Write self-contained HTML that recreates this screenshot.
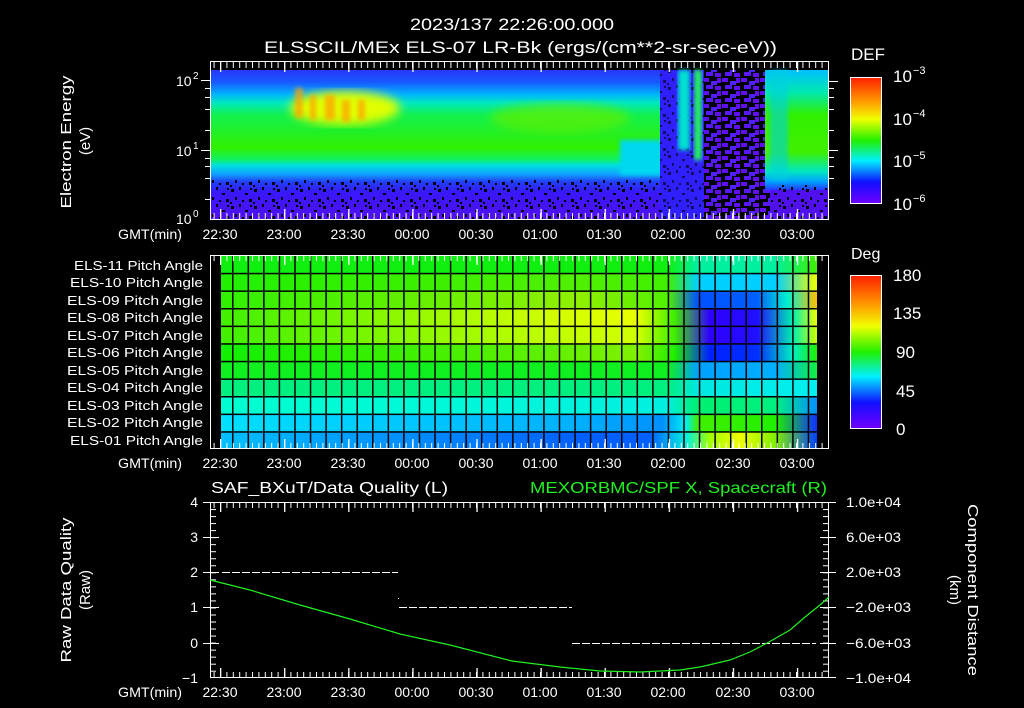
<!DOCTYPE html>
<html><head><meta charset="utf-8"><style>
html,body{margin:0;padding:0;background:#000;}
svg{display:block}
text{font-family:"Liberation Sans",sans-serif;fill:#fff;}
</style></head><body>
<svg width="1024" height="708" viewBox="0 0 1024 708" xmlns="http://www.w3.org/2000/svg">
<defs>
<linearGradient id="band" x1="0" y1="70" x2="0" y2="219" gradientUnits="userSpaceOnUse">
<stop offset="0" stop-color="#2838f8"/><stop offset="0.08" stop-color="#1858ff"/>
<stop offset="0.16" stop-color="#00b0ff"/><stop offset="0.22" stop-color="#00e8c0"/>
<stop offset="0.3" stop-color="#10f050"/><stop offset="0.52" stop-color="#30f000"/>
<stop offset="0.6" stop-color="#10f060"/><stop offset="0.64" stop-color="#00e0e0"/>
<stop offset="0.7" stop-color="#10a0ff"/><stop offset="0.75" stop-color="#2040ff"/>
<stop offset="0.82" stop-color="#3818ff"/><stop offset="1" stop-color="#5010f0"/>
</linearGradient>
<linearGradient id="band2" x1="0" y1="70" x2="0" y2="219" gradientUnits="userSpaceOnUse">
<stop offset="0" stop-color="#00c0ff"/><stop offset="0.15" stop-color="#00e8b0"/>
<stop offset="0.3" stop-color="#30f000"/><stop offset="0.55" stop-color="#40f000"/>
<stop offset="0.68" stop-color="#00e8c0"/><stop offset="0.75" stop-color="#00a0ff"/>
<stop offset="0.82" stop-color="#3020ff"/><stop offset="1" stop-color="#5010f0"/>
</linearGradient>
<filter id="bl"><feGaussianBlur stdDeviation="5"/></filter>
<filter id="bl2"><feGaussianBlur stdDeviation="2"/></filter>
<pattern id="noise" patternUnits="userSpaceOnUse" width="23" height="17">
<rect x="1" y="2" width="3" height="3" fill="#000"/><rect x="9" y="0" width="2" height="3" fill="#000"/>
<rect x="15" y="6" width="3" height="2" fill="#000"/><rect x="5" y="10" width="2" height="3" fill="#000"/>
<rect x="19" y="12" width="3" height="3" fill="#000"/><rect x="12" y="13" width="2" height="2" fill="#000"/>
<rect x="0" y="15" width="2" height="2" fill="#000"/><rect x="20" y="1" width="2" height="2" fill="#000"/>
</pattern>
<pattern id="noise2" patternUnits="userSpaceOnUse" width="19" height="13">
<rect x="0" y="0" width="19" height="13" fill="#000"/>
<rect x="0" y="0" width="6" height="4" fill="#6010f0"/><rect x="8" y="3" width="6" height="4" fill="#5020ff"/>
<rect x="14" y="0" width="4" height="5" fill="#6010f0"/><rect x="3" y="7" width="7" height="4" fill="#5818ff"/>
<rect x="12" y="8" width="6" height="4" fill="#6010f0"/>
</pattern>
<pattern id="tkmin" patternUnits="userSpaceOnUse" x="220" y="0" width="6.4" height="708">
<rect x="0" y="0" width="1" height="708" fill="#fff"/></pattern>
<pattern id="tkmaj" patternUnits="userSpaceOnUse" x="220" y="0" width="64.1" height="708">
<rect x="0" y="0" width="1.3" height="708" fill="#fff"/></pattern>
<pattern id="tkv" patternUnits="userSpaceOnUse" x="0" y="502" width="1024" height="7.03">
<rect x="0" y="0" width="1024" height="1" fill="#fff"/></pattern>
<pattern id="grid" patternUnits="userSpaceOnUse" x="232" y="0" width="15.56" height="708">
<rect x="0" y="0" width="1.5" height="708" fill="#000"/></pattern>
<linearGradient id="cb" x1="0" y1="0" x2="0" y2="1">
<stop offset="0" stop-color="#ff2000"/><stop offset="0.2" stop-color="#ffa000"/>
<stop offset="0.33" stop-color="#f0ff00"/><stop offset="0.5" stop-color="#20f000"/>
<stop offset="0.66" stop-color="#00f0ff"/><stop offset="0.83" stop-color="#1010ff"/>
<stop offset="1" stop-color="#7000ff"/></linearGradient>
<linearGradient id="r1" gradientUnits="userSpaceOnUse" x1="221" x2="817" y1="0" y2="0"><stop offset="0" stop-color="#10f010"/><stop offset="0.75" stop-color="#10f010"/><stop offset="0.8" stop-color="#00f0a0"/><stop offset="0.93" stop-color="#00f0a0"/><stop offset="1" stop-color="#40f000"/></linearGradient>
<linearGradient id="r2" gradientUnits="userSpaceOnUse" x1="221" x2="817" y1="0" y2="0"><stop offset="0" stop-color="#20f000"/><stop offset="0.6" stop-color="#50f000"/><stop offset="0.75" stop-color="#40f000"/><stop offset="0.8" stop-color="#00d0ff"/><stop offset="0.93" stop-color="#00d0ff"/><stop offset="1" stop-color="#f0ff00"/></linearGradient>
<linearGradient id="r3" gradientUnits="userSpaceOnUse" x1="221" x2="817" y1="0" y2="0"><stop offset="0" stop-color="#30f000"/><stop offset="0.6" stop-color="#90f000"/><stop offset="0.75" stop-color="#50f000"/><stop offset="0.8" stop-color="#0050ff"/><stop offset="0.9" stop-color="#0060ff"/><stop offset="0.95" stop-color="#00f0d0"/><stop offset="1" stop-color="#ffc000"/></linearGradient>
<linearGradient id="r4" gradientUnits="userSpaceOnUse" x1="221" x2="817" y1="0" y2="0"><stop offset="0" stop-color="#40f000"/><stop offset="0.55" stop-color="#d0ff00"/><stop offset="0.7" stop-color="#e8ff00"/><stop offset="0.76" stop-color="#40f000"/><stop offset="0.82" stop-color="#3000ff"/><stop offset="0.9" stop-color="#2010ff"/><stop offset="0.96" stop-color="#00f0b0"/><stop offset="1" stop-color="#f0ff00"/></linearGradient>
<linearGradient id="r5" gradientUnits="userSpaceOnUse" x1="221" x2="817" y1="0" y2="0"><stop offset="0" stop-color="#40f000"/><stop offset="0.55" stop-color="#c0ff00"/><stop offset="0.7" stop-color="#d0ff00"/><stop offset="0.76" stop-color="#40f000"/><stop offset="0.82" stop-color="#3000ff"/><stop offset="0.9" stop-color="#2010ff"/><stop offset="0.96" stop-color="#00f0b0"/><stop offset="1" stop-color="#d0ff00"/></linearGradient>
<linearGradient id="r6" gradientUnits="userSpaceOnUse" x1="221" x2="817" y1="0" y2="0"><stop offset="0" stop-color="#10f000"/><stop offset="0.55" stop-color="#60f000"/><stop offset="0.7" stop-color="#80f000"/><stop offset="0.76" stop-color="#20f000"/><stop offset="0.82" stop-color="#0020ff"/><stop offset="0.9" stop-color="#0030ff"/><stop offset="0.96" stop-color="#00f0c0"/><stop offset="1" stop-color="#20f000"/></linearGradient>
<linearGradient id="r7" gradientUnits="userSpaceOnUse" x1="221" x2="817" y1="0" y2="0"><stop offset="0" stop-color="#10f020"/><stop offset="0.75" stop-color="#10f020"/><stop offset="0.8" stop-color="#00a0ff"/><stop offset="0.93" stop-color="#00b0ff"/><stop offset="1" stop-color="#10f040"/></linearGradient>
<linearGradient id="r8" gradientUnits="userSpaceOnUse" x1="221" x2="817" y1="0" y2="0"><stop offset="0" stop-color="#00f080"/><stop offset="0.75" stop-color="#00f080"/><stop offset="0.8" stop-color="#00e8e0"/><stop offset="1" stop-color="#00f0f0"/></linearGradient>
<linearGradient id="r9" gradientUnits="userSpaceOnUse" x1="221" x2="817" y1="0" y2="0"><stop offset="0" stop-color="#00ffd0"/><stop offset="0.75" stop-color="#00f0e0"/><stop offset="0.8" stop-color="#00f070"/><stop offset="0.93" stop-color="#00f080"/><stop offset="1" stop-color="#0090ff"/></linearGradient>
<linearGradient id="r10" gradientUnits="userSpaceOnUse" x1="221" x2="817" y1="0" y2="0"><stop offset="0" stop-color="#00e0ff"/><stop offset="0.6" stop-color="#00b0ff"/><stop offset="0.74" stop-color="#0090ff"/><stop offset="0.78" stop-color="#00f0f0"/><stop offset="0.8" stop-color="#40f000"/><stop offset="0.93" stop-color="#20f000"/><stop offset="1" stop-color="#1030ff"/></linearGradient>
<linearGradient id="r11" gradientUnits="userSpaceOnUse" x1="221" x2="817" y1="0" y2="0"><stop offset="0" stop-color="#00c0ff"/><stop offset="0.6" stop-color="#0060ff"/><stop offset="0.72" stop-color="#0060ff"/><stop offset="0.78" stop-color="#00f0e0"/><stop offset="0.82" stop-color="#a0ff00"/><stop offset="0.87" stop-color="#f0ff00"/><stop offset="0.93" stop-color="#80f000"/><stop offset="1" stop-color="#0040ff"/></linearGradient>
</defs>

<text x="512" y="30" font-size="17" text-anchor="middle" textLength="204" lengthAdjust="spacingAndGlyphs">2023/137 22:26:00.000</text>
<text x="264" y="53" font-size="17" textLength="513" lengthAdjust="spacingAndGlyphs">ELSSCIL/MEx ELS-07 LR-Bk  (ergs/(cm**2-sr-sec-eV))</text>

<!-- TOP SPECTROGRAM -->
<rect x="211" y="70" width="618" height="149" fill="#5010f0"/>
<rect x="211" y="70" width="450" height="149" fill="url(#band)"/>
<rect x="620" y="140" width="42" height="35" fill="#00d8f0" filter="url(#bl2)"/>
<ellipse cx="345" cy="108" rx="55" ry="17" fill="#e0ff00" filter="url(#bl)"/>
<g fill="#ffa000" opacity="0.75" filter="url(#bl2)">
<rect x="295" y="88" width="8" height="30"/><rect x="310" y="95" width="6" height="25"/><rect x="325" y="95" width="10" height="25"/><rect x="342" y="100" width="8" height="22"/><rect x="358" y="100" width="7" height="20"/>
</g>
<ellipse cx="560" cy="118" rx="70" ry="15" fill="#60f000" filter="url(#bl)" opacity="0.7"/>
<rect x="660" y="70" width="45" height="149" fill="#3020ff"/>
<rect x="660" y="70" width="45" height="149" fill="url(#noise)" opacity="0.6"/>
<rect x="678" y="70" width="12" height="80" fill="#00e0d0" filter="url(#bl2)"/>
<rect x="694" y="70" width="8" height="90" fill="#20f060" filter="url(#bl2)"/>
<rect x="704" y="70" width="66" height="149" fill="url(#noise2)"/>
<rect x="765" y="70" width="63" height="120" fill="url(#band2)"/>
<rect x="770" y="70" width="18" height="110" fill="#00d0e0" opacity="0.6" filter="url(#bl2)"/>
<rect x="211" y="178" width="450" height="41" fill="url(#noise)"/>
<rect x="770" y="185" width="58" height="34" fill="url(#noise)"/>
<!-- frame & ticks -->
<rect x="210.5" y="61.5" width="618" height="158" fill="none" stroke="#fff"/>
<rect x="211" y="62" width="618" height="6" fill="url(#tkmin)"/>
<rect x="211" y="62" width="618" height="10" fill="url(#tkmaj)"/>
<rect x="211" y="213" width="618" height="6" fill="url(#tkmin)"/>
<rect x="211" y="209" width="618" height="10" fill="url(#tkmaj)"/>
<g stroke="#fff" stroke-width="1">
<line x1="201" y1="80.5" x2="210" y2="80.5"/><line x1="205" y1="88.5" x2="210" y2="88.5"/><line x1="205" y1="97.5" x2="210" y2="97.5"/><line x1="205" y1="109.5" x2="210" y2="109.5"/><line x1="205" y1="130.5" x2="210" y2="130.5"/>
<line x1="201" y1="150.5" x2="210" y2="150.5"/><line x1="205" y1="158.5" x2="210" y2="158.5"/><line x1="205" y1="166.5" x2="210" y2="166.5"/><line x1="205" y1="178.5" x2="210" y2="178.5"/><line x1="205" y1="199.5" x2="210" y2="199.5"/>
<line x1="829" y1="81.5" x2="838" y2="81.5"/><line x1="829" y1="88.5" x2="834" y2="88.5"/><line x1="829" y1="97.5" x2="834" y2="97.5"/><line x1="829" y1="109.5" x2="834" y2="109.5"/><line x1="829" y1="130.5" x2="834" y2="130.5"/>
<line x1="829" y1="150.5" x2="838" y2="150.5"/><line x1="829" y1="157.5" x2="834" y2="157.5"/><line x1="829" y1="166.5" x2="834" y2="166.5"/><line x1="829" y1="178.5" x2="834" y2="178.5"/><line x1="829" y1="199.5" x2="834" y2="199.5"/>
</g>
<text x="176" y="86" font-size="14">10</text><text x="193" y="79" font-size="10">2</text>
<text x="176" y="156" font-size="14">10</text><text x="193" y="149" font-size="10">1</text>
<text x="176" y="224" font-size="14">10</text><text x="193" y="217" font-size="10">0</text>
<text transform="translate(71,142) rotate(-90)" font-size="15" text-anchor="middle" textLength="133" lengthAdjust="spacingAndGlyphs">Electron Energy</text>
<text transform="translate(90,141) rotate(-90)" font-size="15" text-anchor="middle">(eV)</text>
<g font-size="14">
<text x="118" y="239" textLength="64" lengthAdjust="spacingAndGlyphs">GMT(min)</text>
<text x="220" y="239" text-anchor="middle">22:30</text><text x="284" y="239" text-anchor="middle">23:00</text><text x="348" y="239" text-anchor="middle">23:30</text><text x="412" y="239" text-anchor="middle">00:00</text><text x="476" y="239" text-anchor="middle">00:30</text><text x="540" y="239" text-anchor="middle">01:00</text><text x="604" y="239" text-anchor="middle">01:30</text><text x="668" y="239" text-anchor="middle">02:00</text><text x="733" y="239" text-anchor="middle">02:30</text><text x="797" y="239" text-anchor="middle">03:00</text>
</g>
<text x="851" y="60" font-size="17">DEF</text>
<rect x="850.5" y="77.5" width="31" height="126" fill="url(#cb)" stroke="#fff"/>
<g font-size="17"><text x="893" y="82">10</text><text x="893" y="125">10</text><text x="893" y="167">10</text><text x="893" y="210">10</text></g>
<g font-size="11"><text x="913" y="74">−3</text><text x="913" y="117">−4</text><text x="913" y="159">−5</text><text x="913" y="202">−6</text></g>

<!-- PITCH ANGLE PANEL -->
<rect x="221" y="256" width="596" height="17.6" fill="url(#r1)"/>
<rect x="221" y="273.6" width="596" height="17.6" fill="url(#r2)"/>
<rect x="221" y="291.2" width="596" height="17.6" fill="url(#r3)"/>
<rect x="221" y="308.8" width="596" height="17.6" fill="url(#r4)"/>
<rect x="221" y="326.4" width="596" height="17.6" fill="url(#r5)"/>
<rect x="221" y="344" width="596" height="17.6" fill="url(#r6)"/>
<rect x="221" y="361.6" width="596" height="17.6" fill="url(#r7)"/>
<rect x="221" y="379.2" width="596" height="17.6" fill="url(#r8)"/>
<rect x="221" y="396.8" width="596" height="17.6" fill="url(#r9)"/>
<rect x="221" y="414.4" width="596" height="17.6" fill="url(#r10)"/>
<rect x="221" y="432" width="596" height="17" fill="url(#r11)"/>
<rect x="221" y="256" width="596" height="193" fill="url(#grid)"/>
<g fill="#000"><rect x="221" y="272.8" width="596" height="1.5"/><rect x="221" y="290.4" width="596" height="1.5"/><rect x="221" y="308" width="596" height="1.5"/><rect x="221" y="325.6" width="596" height="1.5"/><rect x="221" y="343.2" width="596" height="1.5"/><rect x="221" y="360.8" width="596" height="1.5"/><rect x="221" y="378.4" width="596" height="1.5"/><rect x="221" y="396" width="596" height="1.5"/><rect x="221" y="413.6" width="596" height="1.5"/><rect x="221" y="431.2" width="596" height="1.5"/></g>
<rect x="210.5" y="255.5" width="618" height="193" fill="none" stroke="#fff"/>
<rect x="211" y="256" width="618" height="5" fill="url(#tkmin)"/>
<rect x="211" y="256" width="618" height="9" fill="url(#tkmaj)"/>
<rect x="211" y="443" width="618" height="5" fill="url(#tkmin)"/>
<rect x="211" y="439" width="618" height="9" fill="url(#tkmaj)"/>
<g font-size="13" text-anchor="end">
<text x="203" y="270" textLength="129" lengthAdjust="spacingAndGlyphs">ELS-11 Pitch Angle</text>
<text x="203" y="287" textLength="133" lengthAdjust="spacingAndGlyphs">ELS-10 Pitch Angle</text>
<text x="203" y="305" textLength="136" lengthAdjust="spacingAndGlyphs">ELS-09 Pitch Angle</text>
<text x="203" y="322" textLength="136" lengthAdjust="spacingAndGlyphs">ELS-08 Pitch Angle</text>
<text x="203" y="340" textLength="136" lengthAdjust="spacingAndGlyphs">ELS-07 Pitch Angle</text>
<text x="203" y="357" textLength="136" lengthAdjust="spacingAndGlyphs">ELS-06 Pitch Angle</text>
<text x="203" y="375" textLength="136" lengthAdjust="spacingAndGlyphs">ELS-05 Pitch Angle</text>
<text x="203" y="392" textLength="136" lengthAdjust="spacingAndGlyphs">ELS-04 Pitch Angle</text>
<text x="203" y="410" textLength="136" lengthAdjust="spacingAndGlyphs">ELS-03 Pitch Angle</text>
<text x="203" y="427" textLength="136" lengthAdjust="spacingAndGlyphs">ELS-02 Pitch Angle</text>
<text x="203" y="445" textLength="133" lengthAdjust="spacingAndGlyphs">ELS-01 Pitch Angle</text>
</g>
<g font-size="14">
<text x="118" y="468" textLength="64" lengthAdjust="spacingAndGlyphs">GMT(min)</text>
<text x="220" y="468" text-anchor="middle">22:30</text><text x="284" y="468" text-anchor="middle">23:00</text><text x="348" y="468" text-anchor="middle">23:30</text><text x="412" y="468" text-anchor="middle">00:00</text><text x="476" y="468" text-anchor="middle">00:30</text><text x="540" y="468" text-anchor="middle">01:00</text><text x="604" y="468" text-anchor="middle">01:30</text><text x="668" y="468" text-anchor="middle">02:00</text><text x="733" y="468" text-anchor="middle">02:30</text><text x="797" y="468" text-anchor="middle">03:00</text>
</g>
<text x="851" y="259" font-size="16">Deg</text>
<rect x="850.5" y="275.5" width="31" height="153" fill="url(#cb)" stroke="#fff"/>
<g font-size="17"><text x="893" y="281">180</text><text x="893" y="319">135</text><text x="896" y="358">90</text><text x="896" y="397">45</text><text x="896" y="435">0</text></g>

<!-- BOTTOM PANEL -->
<text x="211" y="493" font-size="16" textLength="237" lengthAdjust="spacingAndGlyphs">SAF_BXuT/Data Quality (L)</text>
<text x="530" y="493" font-size="16" style="fill:#20f020" textLength="297" lengthAdjust="spacingAndGlyphs">MEXORBMC/SPF X, Spacecraft (R)</text>
<rect x="210.5" y="502.5" width="618" height="175" fill="none" stroke="#fff"/>
<rect x="211" y="503" width="618" height="5" fill="url(#tkmin)"/>
<rect x="211" y="503" width="618" height="9" fill="url(#tkmaj)"/>
<rect x="211" y="672" width="618" height="5" fill="url(#tkmin)"/>
<rect x="211" y="668" width="618" height="9" fill="url(#tkmaj)"/>
<rect x="211" y="503" width="5" height="175" fill="url(#tkv)"/>
<rect x="823" y="503" width="5" height="175" fill="url(#tkv)"/>
<g stroke="#fff">
<line x1="203" y1="502.5" x2="219" y2="502.5"/><line x1="203" y1="537.5" x2="219" y2="537.5"/><line x1="203" y1="572.5" x2="219" y2="572.5"/><line x1="203" y1="607.5" x2="219" y2="607.5"/><line x1="203" y1="643.5" x2="219" y2="643.5"/>
<line x1="820" y1="537.5" x2="836" y2="537.5"/><line x1="820" y1="572.5" x2="836" y2="572.5"/><line x1="820" y1="607.5" x2="836" y2="607.5"/><line x1="820" y1="643.5" x2="836" y2="643.5"/><line x1="820" y1="502.5" x2="836" y2="502.5"/><line x1="820" y1="677.5" x2="836" y2="677.5"/>
</g>
<g font-size="14" text-anchor="end">
<text x="198" y="507">4</text><text x="198" y="542">3</text><text x="198" y="577">2</text><text x="198" y="612">1</text><text x="198" y="648">0</text><text x="198" y="683">−1</text>
</g>
<g font-size="14">
<text x="846" y="507" textLength="55" lengthAdjust="spacingAndGlyphs">1.0e+04</text>
<text x="846" y="542" textLength="55" lengthAdjust="spacingAndGlyphs">6.0e+03</text>
<text x="846" y="577" textLength="55" lengthAdjust="spacingAndGlyphs">2.0e+03</text>
<text x="846" y="612" textLength="65" lengthAdjust="spacingAndGlyphs">−2.0e+03</text>
<text x="846" y="648" textLength="65" lengthAdjust="spacingAndGlyphs">−6.0e+03</text>
<text x="846" y="683" textLength="65" lengthAdjust="spacingAndGlyphs">−1.0e+04</text>
</g>
<g stroke="#fff" stroke-width="1" stroke-dasharray="8 2">
<line x1="222" y1="572.5" x2="398" y2="572.5"/>
<line x1="399" y1="607.5" x2="572" y2="607.5"/>
<line x1="572" y1="643.5" x2="816" y2="643.5"/>
</g>
<rect x="398" y="598" width="1" height="1" fill="#fff"/>
<polyline fill="none" stroke="#20f020" stroke-width="1.2" points="210,580 250,590 300,605 350,619 400,634 450,645 512,661 560,667 600,671 640,672 680,670 700,667 730,660 750,652 769,642 790,630 805,617 820,605 829,597"/>
<text transform="translate(71,590) rotate(-90)" font-size="15" text-anchor="middle" textLength="145" lengthAdjust="spacingAndGlyphs">Raw Data Quality</text>
<text transform="translate(90,590) rotate(-90)" font-size="15" text-anchor="middle">(Raw)</text>
<text transform="translate(968,590) rotate(90)" font-size="15" text-anchor="middle" textLength="172" lengthAdjust="spacingAndGlyphs">Component Distance</text>
<text transform="translate(950,590) rotate(90)" font-size="15" text-anchor="middle">(km)</text>
<g font-size="14">
<text x="118" y="697" textLength="64" lengthAdjust="spacingAndGlyphs">GMT(min)</text>
<text x="220" y="697" text-anchor="middle">22:30</text><text x="284" y="697" text-anchor="middle">23:00</text><text x="348" y="697" text-anchor="middle">23:30</text><text x="412" y="697" text-anchor="middle">00:00</text><text x="476" y="697" text-anchor="middle">00:30</text><text x="540" y="697" text-anchor="middle">01:00</text><text x="604" y="697" text-anchor="middle">01:30</text><text x="668" y="697" text-anchor="middle">02:00</text><text x="733" y="697" text-anchor="middle">02:30</text><text x="797" y="697" text-anchor="middle">03:00</text>
</g>
</svg>
</body></html>
